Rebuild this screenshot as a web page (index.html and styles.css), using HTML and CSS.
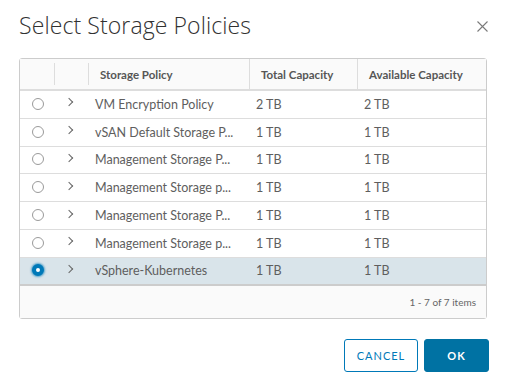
FILE: index.html
```html
<!DOCTYPE html>
<html lang="en">
<head>
    <meta charset="UTF-8">
    <title>Select Storage Policies</title>
    <link rel="stylesheet" href="styles.css">
</head>
<body>
    <div class="modal">
        <div class="modal-header">
            <h1>Select Storage Policies</h1>
            <button class="close-btn" aria-label="Close">
                <svg width="11" height="11" viewBox="0 0 11 11"><path d="M0.5 0.5 L10.5 10.5 M10.5 0.5 L0.5 10.5" stroke="#7a7a7a" stroke-width="1.1" fill="none"/></svg>
            </button>
        </div>

        <div class="datagrid">
            <div class="row head">
                <div class="cell c-radio"></div>
                <div class="cell c-caret"></div>
                <div class="cell c-name">Storage Policy</div>
                <div class="cell c-total">Total Capacity</div>
                <div class="cell c-avail">Available Capacity</div>
            </div>
            <div class="row">
                <div class="cell c-radio"><span class="radio"></span></div>
                <div class="cell c-caret"><span class="caret"></span></div>
                <div class="cell c-name">VM Encryption Policy</div>
                <div class="cell c-total">2 TB</div>
                <div class="cell c-avail">2 TB</div>
            </div>
            <div class="row">
                <div class="cell c-radio"><span class="radio"></span></div>
                <div class="cell c-caret"><span class="caret"></span></div>
                <div class="cell c-name">vSAN Default Storage P...</div>
                <div class="cell c-total">1 TB</div>
                <div class="cell c-avail">1 TB</div>
            </div>
            <div class="row">
                <div class="cell c-radio"><span class="radio"></span></div>
                <div class="cell c-caret"><span class="caret"></span></div>
                <div class="cell c-name">Management Storage P...</div>
                <div class="cell c-total">1 TB</div>
                <div class="cell c-avail">1 TB</div>
            </div>
            <div class="row">
                <div class="cell c-radio"><span class="radio"></span></div>
                <div class="cell c-caret"><span class="caret"></span></div>
                <div class="cell c-name">Management Storage p...</div>
                <div class="cell c-total">1 TB</div>
                <div class="cell c-avail">1 TB</div>
            </div>
            <div class="row">
                <div class="cell c-radio"><span class="radio"></span></div>
                <div class="cell c-caret"><span class="caret"></span></div>
                <div class="cell c-name">Management Storage P...</div>
                <div class="cell c-total">1 TB</div>
                <div class="cell c-avail">1 TB</div>
            </div>
            <div class="row">
                <div class="cell c-radio"><span class="radio"></span></div>
                <div class="cell c-caret"><span class="caret"></span></div>
                <div class="cell c-name">Management Storage p...</div>
                <div class="cell c-total">1 TB</div>
                <div class="cell c-avail">1 TB</div>
            </div>
            <div class="row selected">
                <div class="cell c-radio"><span class="radio checked"></span></div>
                <div class="cell c-caret"><span class="caret"></span></div>
                <div class="cell c-name">vSphere-Kubernetes</div>
                <div class="cell c-total">1 TB</div>
                <div class="cell c-avail">1 TB</div>
            </div>
            <div class="grid-footer">1 - 7 of 7 items</div>
        </div>

        <div class="modal-footer">
            <button class="btn btn-outline">CANCEL</button>
            <button class="btn btn-primary">OK</button>
        </div>
    </div>
</body>
</html>
```

FILE: styles.css
```css
body {
    margin: 0;
    background: #ffffff;
    font-family: 'Lato', 'Open Sans', sans-serif;
    color: #5e5e5e;
}

.modal {
    width: 509px;
    height: 387px;
    padding: 0 22px 0 19px;
    box-sizing: border-box;
}

.modal-header {
    display: flex;
    justify-content: space-between;
    align-items: center;
    height: 50px;
}

.modal-header h1 {
    margin: 0;
    font-family: 'Open Sans', sans-serif;
    font-size: 23px;
    font-weight: 300;
    color: #313131;
    letter-spacing: 0.1px;
}

.close-btn {
    background: none;
    border: none;
    padding: 0;
    margin-right: -1px;
    margin-top: 2px;
    width: 11px;
    height: 11px;
    display: flex;
}

/* datagrid */
.datagrid {
    margin-top: 8px;
    border: 1px solid #cccccc;
    border-radius: 3px;
    font-size: 12.5px;
}

.row {
    display: flex;
    height: 27.8px;
    border-bottom: 1px solid #dddddd;
    box-sizing: border-box;
    align-items: center;
}

.row.head {
    height: 32px;
    background: #fafafa;
    border-bottom: 2px solid #dddddd;
    font-weight: 700;
    font-size: 11.5px;
    color: #565656;
}

.row.selected {
    background: #d9e4ea;
    border-bottom: 2px solid #cccccc;
}

.cell {
    height: 100%;
    display: flex;
    align-items: center;
    box-sizing: border-box;
    padding-left: 6px;
    white-space: nowrap;
}

.head .cell {
    padding-left: 11px;
    border-right: 1px solid #dddddd;
}

.head .cell:last-child {
    border-right: none;
}

.head .cell.c-radio,
.head .cell.c-caret {
    height: 22px;
}

.c-radio { width: 35px; justify-content: center; padding-left: 0; }
.c-caret { width: 34px; justify-content: center; padding-left: 0; }
.c-name { width: 161px; }
.c-total { width: 108px; }
.c-avail { flex: 1; }

.radio {
    width: 12px;
    height: 12px;
    border: 1px solid #9a9a9a;
    border-radius: 50%;
    box-sizing: border-box;
    margin-left: 1px;
    margin-top: -1px;
}

.radio.checked {
    border: 4px solid #0079b8;
    background: #ffffff;
    box-shadow: 0 0 2px 1px rgba(0, 121, 184, 0.6);
}

.caret {
    width: 5px;
    height: 5px;
    border-top: 1px solid #666666;
    border-right: 1px solid #666666;
    transform: rotate(45deg);
    margin-left: -6px;
    margin-top: -4px;
}

.grid-footer {
    height: 32px;
    background: #fafafa;
    display: flex;
    justify-content: flex-end;
    align-items: center;
    padding-right: 10px;
    font-size: 10px;
    color: #666666;
}

/* botones */
.modal-footer {
    display: flex;
    justify-content: flex-end;
    gap: 6px;
    margin-top: 20px;
    margin-right: -2px;
}

.btn {
    height: 33px;
    border-radius: 3px;
    font-family: 'Lato', sans-serif;
    font-size: 11px;
    font-weight: 700;
    letter-spacing: 1px;
    cursor: pointer;
}

.btn-outline {
    width: 74px;
    background: #ffffff;
    border: 1px solid #0079b8;
    color: #0079b8;
    font-weight: 400;
}

.btn-primary {
    width: 65px;
    background: #0072a3;
    border: 1px solid #0072a3;
    color: #ffffff;
}
```
